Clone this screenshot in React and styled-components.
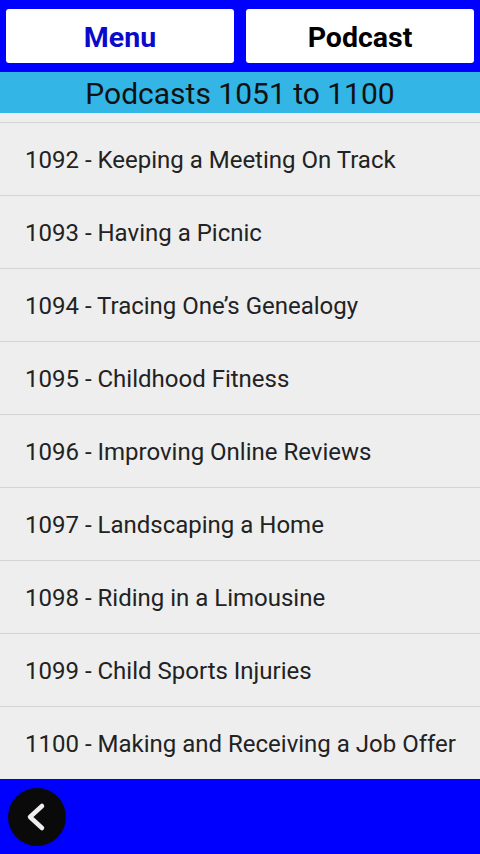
import React from 'react'
import styled, { createGlobalStyle } from 'styled-components'

const podcasts = [
  [1092, 'Keeping a Meeting On Track'],
  [1093, 'Having a Picnic'],
  [1094, 'Tracing One’s Genealogy'],
  [1095, 'Childhood Fitness'],
  [1096, 'Improving Online Reviews'],
  [1097, 'Landscaping a Home'],
  [1098, 'Riding in a Limousine'],
  [1099, 'Child Sports Injuries'],
  [1100, 'Making and Receiving a Job Offer'],
]

const GlobalStyle = createGlobalStyle`
  html, body, #root { margin: 0; padding: 0; height: 100%; }
  body { font-family: Roboto, "Liberation Sans", sans-serif; background: #eeeeee; }
`

const Screen = styled.div`
  height: 854px;
  width: 480px;
  display: flex;
  flex-direction: column;
  overflow: hidden;
`

const TopBar = styled.div`
  background: #0000ff;
  height: 72px;
  flex-shrink: 0;
  box-sizing: border-box;
  padding: 9px 6px;
  display: grid;
  grid-template-columns: 1fr 1fr;
  gap: 12px;
`

const TopButton = styled.button`
  border: none;
  border-radius: 3px;
  background: #ffffff;
  color: ${p => (p.$accent ? '#0a0acc' : '#000000')};
  font-family: Roboto, "Liberation Sans", sans-serif;
  font-weight: 700;
  font-size: 28.5px;
  padding: 2px 0 0;
`

const Heading = styled.div`
  background: #33b5e5;
  height: 41px;
  flex-shrink: 0;
  display: flex;
  align-items: center;
  justify-content: center;
  font-size: 30px;
  color: #111;
  padding-top: 2px;
  box-sizing: border-box;
`

const List = styled.div`
  flex: 1;
  overflow: hidden;
  background: #eeeeee;
`

const Row = styled.div`
  height: ${p => (p.$tail ? 10 : 73)}px;
  box-sizing: border-box;
  padding: ${p => (p.$tail ? 0 : 2)}px 0 0 25px;
  border-bottom: 1px solid #d4d4d4;
  display: flex;
  align-items: center;
  font-size: 24px;
  color: #222;
  white-space: nowrap;
`

const BottomBar = styled.div`
  background: #0000ff;
  height: 75px;
  flex-shrink: 0;
  display: flex;
  align-items: center;
  padding-left: 8px;
`

const BackButton = styled.div`
  width: 58px;
  height: 58px;
  border-radius: 50%;
  background: #0a0a0a;
  display: flex;
  align-items: center;
  justify-content: center;
`

export default function App() {
  return (
    <Screen>
      <GlobalStyle />
      <TopBar>
        <TopButton $accent>Menu</TopButton>
        <TopButton>Podcast</TopButton>
      </TopBar>
      <Heading>Podcasts 1051 to 1100</Heading>
      <List>
        <Row $tail />
        {podcasts.map(([n, title]) => (
          <Row key={n}>{n} - {title}</Row>
        ))}
      </List>
      <BottomBar>
        <BackButton>
          <svg width="30" height="30" viewBox="0 0 30 30">
            <path d="M20 4 L8 15 L20 26" fill="none" stroke="#eeeeee" strokeWidth="4.5" strokeLinecap="round" strokeLinejoin="round" />
          </svg>
        </BackButton>
      </BottomBar>
    </Screen>
  )
}
